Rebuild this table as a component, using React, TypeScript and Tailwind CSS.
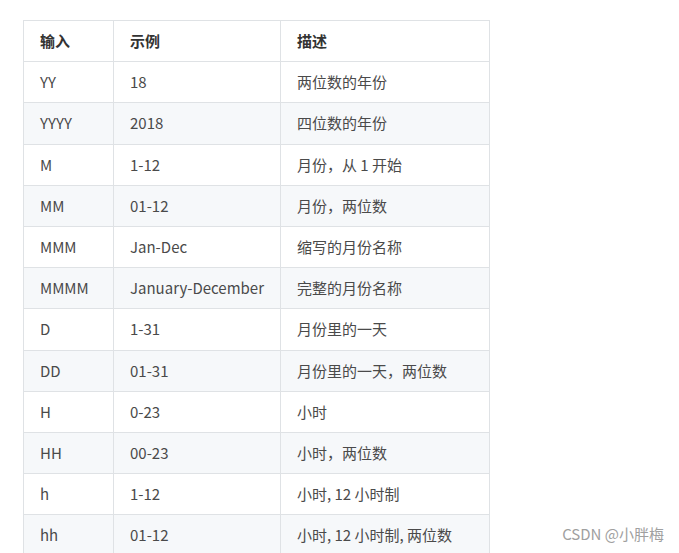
const ROWS: [string, string, string][] = [
  ['YY', '18', '两位数的年份'],
  ['YYYY', '2018', '四位数的年份'],
  ['M', '1-12', '月份，从 1 开始'],
  ['MM', '01-12', '月份，两位数'],
  ['MMM', 'Jan-Dec', '缩写的月份名称'],
  ['MMMM', 'January-December', '完整的月份名称'],
  ['D', '1-31', '月份里的一天'],
  ['DD', '01-31', '月份里的一天，两位数'],
  ['H', '0-23', '小时'],
  ['HH', '00-23', '小时，两位数'],
  ['h', '1-12', '小时, 12 小时制'],
  ['hh', '01-12', '小时, 12 小时制, 两位数'],
]

export default function App() {
  return (
    <div
      className="relative w-[679px] h-[553px] overflow-hidden bg-white"
      style={{ fontFamily: '"Microsoft YaHei", "Noto Sans CJK SC", "Noto Sans", sans-serif' }}
    >
      <div className="pt-[20px] pl-[23px]">
        <table className="border-collapse text-[15px] leading-[24.2px] text-[#4a4a4a]">
          <colgroup>
            <col className="w-[90px]" />
            <col className="w-[165px]" />
            <col className="w-[209px]" />
          </colgroup>
          <thead>
            <tr className="bg-white">
              <th className="border border-[#dfe2e5] px-4 py-2 text-left font-bold text-[#333]">输入</th>
              <th className="border border-[#dfe2e5] px-4 py-2 text-left font-bold text-[#333]">示例</th>
              <th className="border border-[#dfe2e5] px-4 py-2 text-left font-bold text-[#333]">描述</th>
            </tr>
          </thead>
          <tbody>
            {ROWS.map((r, i) => (
              <tr key={r[0]} className={i % 2 === 1 ? 'bg-[#f6f8fa]' : 'bg-white'}>
                {r.map((c, j) => (
                  <td key={j} className="border border-[#dfe2e5] px-4 py-2 whitespace-nowrap">
                    {c}
                  </td>
                ))}
              </tr>
            ))}
          </tbody>
        </table>
      </div>

      {/* watermark */}
      <div className="absolute right-[15px] bottom-[8px] text-[15px] text-[#a0a0a0]">
        CSDN @小胖梅
      </div>
    </div>
  )
}
